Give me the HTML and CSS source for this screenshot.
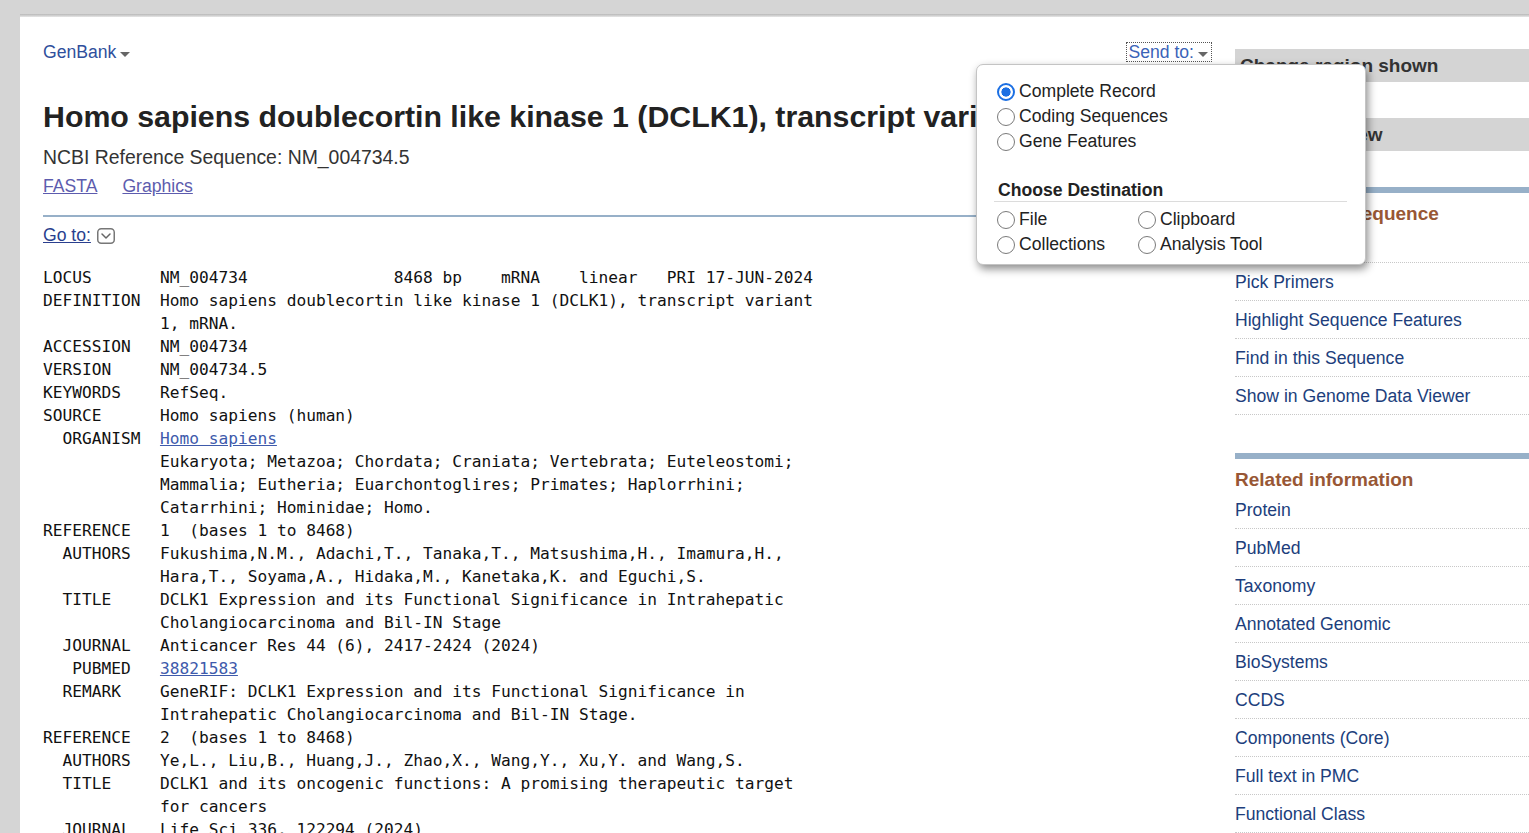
FILE: index.html
```html
<!DOCTYPE html>
<html lang="en">
<head>
<meta charset="utf-8">
<title>Homo sapiens doublecortin like kinase 1 (DCLK1), transcript variant 1, mRNA - Nucleotide</title>
<link rel="stylesheet" href="styles.css">
</head>
<body>
<div class="page">
  <main class="main">
    <div class="toprow">
      <a class="db-select" href="#">GenBank<span class="caret"></span></a>
      <a class="sendto" href="#">Send to:<span class="caret"></span></a>
    </div>
    <h1 class="title">Homo sapiens doublecortin like kinase 1 (DCLK1), transcript variant 1, mRNA</h1>
    <p class="refseq">NCBI Reference Sequence: NM_004734.5</p>
    <p class="formats"><a href="#">FASTA</a><a href="#">Graphics</a></p>
    <div class="goto">
      <a href="#">Go to:</a>
      <svg class="goto-icon" width="18" height="16" viewBox="0 0 18 16" aria-hidden="true">
        <rect x="0.75" y="0.75" width="16.5" height="14.5" rx="3.5" fill="#fff" stroke="#777" stroke-width="1.5"/>
        <path d="M5 6 L9 10 L13 6" fill="none" stroke="#666" stroke-width="1.5" stroke-linecap="round" stroke-linejoin="round"/>
      </svg>
    </div>
<pre class="gb">LOCUS       NM_004734               8468 bp    mRNA    linear   PRI 17-JUN-2024
DEFINITION  Homo sapiens doublecortin like kinase 1 (DCLK1), transcript variant
            1, mRNA.
ACCESSION   NM_004734
VERSION     NM_004734.5
KEYWORDS    RefSeq.
SOURCE      Homo sapiens (human)
  ORGANISM  <a href="#">Homo sapiens</a>
            Eukaryota; Metazoa; Chordata; Craniata; Vertebrata; Euteleostomi;
            Mammalia; Eutheria; Euarchontoglires; Primates; Haplorrhini;
            Catarrhini; Hominidae; Homo.
REFERENCE   1  (bases 1 to 8468)
  AUTHORS   Fukushima,N.M., Adachi,T., Tanaka,T., Matsushima,H., Imamura,H.,
            Hara,T., Soyama,A., Hidaka,M., Kanetaka,K. and Eguchi,S.
  TITLE     DCLK1 Expression and its Functional Significance in Intrahepatic
            Cholangiocarcinoma and Bil-IN Stage
  JOURNAL   Anticancer Res 44 (6), 2417-2424 (2024)
   PUBMED   <a href="#">38821583</a>
  REMARK    GeneRIF: DCLK1 Expression and its Functional Significance in
            Intrahepatic Cholangiocarcinoma and Bil-IN Stage.
REFERENCE   2  (bases 1 to 8468)
  AUTHORS   Ye,L., Liu,B., Huang,J., Zhao,X., Wang,Y., Xu,Y. and Wang,S.
  TITLE     DCLK1 and its oncogenic functions: A promising therapeutic target
            for cancers
  JOURNAL   Life Sci 336, 122294 (2024)</pre>
  </main>

  <aside class="sidebar">
    <div class="collapsed">Change region shown</div>
    <div class="collapsed">Customize view</div>
    <section class="sb-section">
      <h2 class="sb-head">Analyze this sequence</h2>
      <ul class="sb-list">
        <li><a href="#">Run BLAST</a></li>
        <li><a href="#">Pick Primers</a></li>
        <li><a href="#">Highlight Sequence Features</a></li>
        <li><a href="#">Find in this Sequence</a></li>
        <li><a href="#">Show in Genome Data Viewer</a></li>
      </ul>
    </section>
    <section class="sb-section">
      <h2 class="sb-head">Related information</h2>
      <ul class="sb-list">
        <li><a href="#">Protein</a></li>
        <li><a href="#">PubMed</a></li>
        <li><a href="#">Taxonomy</a></li>
        <li><a href="#">Annotated Genomic</a></li>
        <li><a href="#">BioSystems</a></li>
        <li><a href="#">CCDS</a></li>
        <li><a href="#">Components (Core)</a></li>
        <li><a href="#">Full text in PMC</a></li>
        <li><a href="#">Functional Class</a></li>
      </ul>
    </section>
  </aside>

  <div class="popup">
    <label class="choice"><input type="radio" class="radio" name="fmt" checked>Complete Record</label>
    <label class="choice"><input type="radio" class="radio" name="fmt">Coding Sequences</label>
    <label class="choice"><input type="radio" class="radio" name="fmt">Gene Features</label>
    <div class="dest-head">Choose Destination</div>
    <div class="dest-grid">
      <label class="choice"><input type="radio" class="radio" name="dest">File</label>
      <label class="choice"><input type="radio" class="radio" name="dest">Clipboard</label>
      <label class="choice"><input type="radio" class="radio" name="dest">Collections</label>
      <label class="choice"><input type="radio" class="radio" name="dest">Analysis Tool</label>
    </div>
  </div>
</div>
</body>
</html>
```

FILE: styles.css
```css
html, body {
  margin: 0;
  padding: 0;
}
body {
  background: #d5d5d5;
  padding: 14px 0 0 20px;
  height: 833px;
  box-sizing: border-box;
  overflow: hidden;
  font-family: "Liberation Sans", Arial, sans-serif;
  color: #222;
}
a {
  text-decoration: none;
}
.page {
  position: relative;
  display: flex;
  gap: 23px;
  padding-left: 23px;
  min-height: 819px;
  overflow: hidden;
  background: linear-gradient(#b8b8b8, #e6e6e6) top left / 100% 3px no-repeat, #fff;
}
.main {
  flex: none;
  width: 1169px;
  padding-top: 27px;
}
.toprow {
  display: flex;
  justify-content: space-between;
  align-items: center;
  height: 22px;
}
.db-select {
  font-size: 17.6px;
  line-height: 22px;
  color: #2f4f9c;
  display: flex;
  align-items: center;
}
.caret {
  display: inline-block;
  width: 0;
  height: 0;
  border-left: 5px solid transparent;
  border-right: 5px solid transparent;
  border-top: 5px solid #666;
  margin-left: 4px;
  margin-top: 4px;
}
.sendto {
  font-size: 17.6px;
  line-height: 18px;
  color: #3a63b8;
  border: 1px dotted #555;
  padding: 0 3px 0 1px;
  display: flex;
  align-items: center;
}
.title {
  margin: 37px 0 0;
  font-size: 30.3px;
  line-height: 34px;
  font-weight: bold;
  color: #222;
  white-space: nowrap;
}
.refseq {
  margin: 12px 0 0;
  font-size: 19.4px;
  line-height: 22px;
  color: #333;
}
.formats {
  margin: 8px 0 0;
  font-size: 17.6px;
  line-height: 20px;
  display: flex;
  gap: 25px;
}
.formats a {
  color: #5d5cae;
  text-decoration: underline;
}
.goto {
  margin-top: 19px;
  border-top: 2px solid #97b0c8;
  padding-top: 8px;
  display: flex;
  align-items: center;
  gap: 6px;
  font-size: 17.6px;
  line-height: 20px;
}
.goto a {
  color: #2a3f8e;
  text-decoration: underline;
}
.goto-icon {
  display: block;
  margin-top: 1px;
}
.gb {
  margin: 21px 0 0;
  font-family: "DejaVu Sans Mono", "Liberation Mono", monospace;
  font-size: 16.2px;
  line-height: 23px;
  color: #111;
}
.gb a {
  color: #3e5aab;
  text-decoration: underline;
}

/* sidebar */
.sidebar {
  flex: none;
  width: 300px;
  padding-top: 35px;
}
.collapsed {
  height: 33px;
  box-sizing: border-box;
  padding: 1px 0 0 5px;
  line-height: 32px;
  background: #d4d4d4;
  font-size: 19px;
  font-weight: bold;
  color: #333;
  margin-bottom: 36px;
}
.collapsed + .sb-section {
  margin-top: 1px;
}
.sb-section {
  border-top: 6px solid #97b0c8;
  margin-bottom: 38px;
}
.sb-head {
  margin: 0;
  padding: 10px 0 0 0;
  font-size: 19px;
  line-height: 22px;
  font-weight: bold;
  color: #985735;
}
.sb-list {
  list-style: none;
  margin: 0;
  padding: 0;
}
.sb-list li {
  padding: 9px 0 8px 0;
  line-height: 20px;
  font-size: 17.6px;
  border-bottom: 1px dotted #c8c8c8;
}
.sb-list a {
  color: #203e7c;
}

/* send-to popup menu */
.popup {
  position: absolute;
  left: 956px;
  top: 50px;
  width: 390px;
  height: 201px;
  box-sizing: border-box;
  background: #fff;
  border: 1px solid #c4c4c4;
  border-radius: 7px;
  box-shadow: 2px 4px 9px rgba(0, 0, 0, 0.45);
  padding: 14px 18px 7px 17px;
  z-index: 10;
}
.choice {
  display: flex;
  align-items: center;
  gap: 4px;
  height: 25px;
  padding-left: 3px;
  font-size: 17.6px;
  color: #222;
}
.radio {
  appearance: none;
  -webkit-appearance: none;
  margin: 0;
  width: 18px;
  height: 18px;
  border-radius: 50%;
  border: 1.5px solid #7a7a7a;
  background: #fff;
  box-sizing: border-box;
  flex: none;
}
.radio:checked {
  border: 2px solid #1b6fe3;
  background: radial-gradient(circle, #1b6fe3 0 4.3px, #fff 4.9px);
}
.dest-head {
  margin-top: 25px;
  height: 22px;
  line-height: 22px;
  padding-left: 4px;
  font-size: 17.6px;
  font-weight: bold;
  color: #222;
  border-bottom: 1px solid #dcdcdc;
}
.dest-grid {
  margin-top: 5px;
  display: grid;
  grid-template-columns: 141px 1fr;
}
```
